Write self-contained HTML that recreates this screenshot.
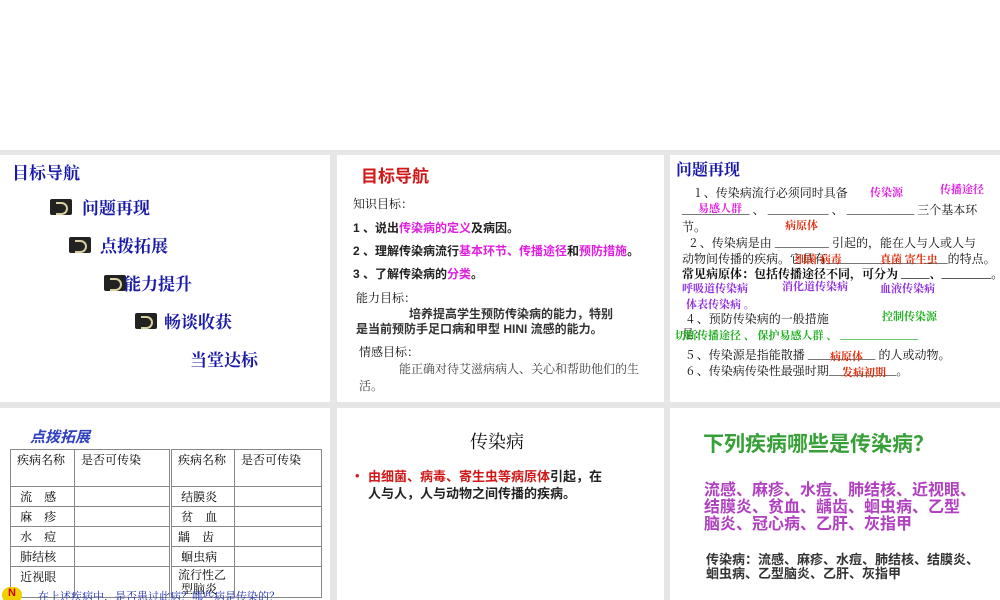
<!DOCTYPE html>
<html><head><meta charset="utf-8"><style>
*{margin:0;padding:0;box-sizing:border-box}
body{width:1000px;height:600px;background:#fff;position:relative;overflow:hidden;font-family:"Liberation Sans","Noto Sans CJK SC",sans-serif}
.gray{position:absolute;left:0;top:150px;width:1000px;height:450px;background:#e6e6e6}
.p{position:absolute;background:#fff;overflow:hidden}
.a{position:absolute;white-space:nowrap}
.nav{color:#1a1aa8;font-weight:bold;font-size:17px;font-family:"Noto Serif CJK SC",serif}
.ic{position:absolute;width:22px;height:16px;background:#222;border-radius:2px}
.ic:after{content:"";position:absolute;left:6px;top:3px;width:10px;height:9px;border:2px solid #d8d0a0;border-left:none;border-radius:0 8px 8px 0}
.b{font-weight:bold;color:#222;font-size:12px}
.m{color:#e020e0}
.hw{font-family:"Noto Serif CJK SC",serif;font-weight:bold;font-size:11px;position:absolute;white-space:nowrap}
.s{font-size:12px;color:#111;font-family:"Noto Serif CJK SC",serif}
table{border-collapse:collapse;font-size:12px;font-family:"Noto Serif CJK SC",serif}
td{border:1px solid #888;vertical-align:top;padding:1px 6px;height:19px}
</style></head><body>
<div class="gray"></div>

<div class="p" style="left:0;top:155px;width:330px;height:247px">
<div class="a nav" style="left:12px;top:4px">目标导航</div>
<div class="ic" style="left:50px;top:44px"></div><div class="a nav" style="left:82px;top:39px">问题再现</div>
<div class="ic" style="left:69px;top:82px"></div><div class="a nav" style="left:100px;top:77px">点拨拓展</div>
<div class="ic" style="left:104px;top:120px"></div><div class="a nav" style="left:124px;top:115px">能力提升</div>
<div class="ic" style="left:135px;top:158px"></div><div class="a nav" style="left:164px;top:153px">畅谈收获</div>
<div class="a nav" style="left:190px;top:191px">当堂达标</div>
</div>

<div class="p" style="left:337px;top:155px;width:327px;height:247px">
<div class="a" style="left:24px;top:7px;color:#d01818;font-weight:bold;font-size:17px">目标导航</div>
<div class="a s" style="left:16px;top:40px">知识目标：</div>
<div class="a b" style="left:16px;top:64px">1 、说出<span class="m">传染病的定义</span>及病因。</div>
<div class="a b" style="left:16px;top:87px">2 、理解传染病流行<span class="m">基本环节、传播途径</span>和<span class="m">预防措施</span>。</div>
<div class="a b" style="left:16px;top:110px">3 、了解传染病的<span class="m">分类</span>。</div>
<div class="a s" style="left:19px;top:134px">能力目标：</div>
<div class="a b" style="left:72px;top:150px;color:#333">培养提高学生预防传染病的能力，特别</div>
<div class="a b" style="left:19px;top:165px;color:#333">是当前预防手足口病和甲型 HINI 流感的能力。</div>
<div class="a s" style="left:22px;top:188px">情感目标：</div>
<div class="a s" style="left:62px;top:205px;color:#444">能正确对待艾滋病病人、关心和帮助他们的生</div>
<div class="a s" style="left:22px;top:222px;color:#444">活。</div>
</div>

<div class="p" style="left:670px;top:155px;width:330px;height:247px;font-family:'Noto Serif CJK SC',serif;font-size:12px;color:#111">
<div class="a" style="left:6px;top:2px;color:#1a1aa8;font-weight:bold;font-size:16px">问题再现</div>
<div class="a" style="left:25px;top:29px">1 、传染病流行必须同时具备</div>
<div class="hw" style="left:200px;top:29px;color:#e020e0">传染源</div>
<div class="hw" style="left:270px;top:26px;color:#e020e0">传播途径</div>
<div class="a" style="left:12px;top:46px">__________ 、 _________ 、 __________ 三个基本环</div>
<div class="hw" style="left:28px;top:45px;color:#e020e0">易感人群</div>
<div class="a" style="left:12px;top:63px">节。</div>
<div class="hw" style="left:115px;top:62px;color:#e03010">病原体</div>
<div class="a" style="left:20px;top:79px">2 、传染病是由 ________ 引起的，能在人与人或人与</div>
<div class="a" style="left:12px;top:95px">动物间传播的疾病。它具有__________________的特点。</div>
<div class="hw" style="left:125px;top:96px;color:#e03010">细菌 病毒</div><div class="hw" style="left:210px;top:96px;color:#e03010">真菌 寄生虫</div>
<div class="a" style="left:12px;top:110px;font-weight:bold">常见病原体：包括传播途径不同，可分为 ____、_______。</div>
<div class="hw" style="left:12px;top:125px;color:#9030e0">呼吸道传染病</div><div class="hw" style="left:112px;top:123px;color:#9030e0">消化道传染病</div><div class="hw" style="left:210px;top:125px;color:#9030e0">血液传染病</div>
<div class="hw" style="left:16px;top:141px;color:#9030e0">体表传染病 。</div>
<div class="a" style="left:17px;top:155px">4 、预防传染病的一般措施</div>
<div class="hw" style="left:212px;top:153px;color:#20b020">控制传染源</div>
<div class="a" style="left:12px;top:170px">是：</div>
<div class="hw" style="left:5px;top:172px;color:#20b020">切断传播途径 、 保护易感人群 、 ____________</div>
<div class="a" style="left:17px;top:191px">5 、传染源是指能散播 __________ 的人或动物。</div>
<div class="hw" style="left:160px;top:193px;color:#e03010">病原体</div>
<div class="a" style="left:17px;top:207px">6 、传染病传染性最强时期__________。</div>
<div class="hw" style="left:172px;top:209px;color:#e03010">发病初期</div>
</div>

<div class="p" style="left:0;top:408px;width:330px;height:192px">
<div class="a" style="left:30px;top:18px;color:#3040c0;font-weight:bold;font-size:15px;font-style:italic">点拨拓展</div>
<table style="position:absolute;left:10px;top:41px;width:312px">
<tr><td style="height:37px;width:64px">疾病名称</td><td style="width:96px">是否可传染</td><td style="width:64px;border-left:3px double #888">疾病名称</td><td>是否可传染</td></tr>
<tr><td>&nbsp;流　感</td><td></td><td style="border-left:3px double #888">&nbsp;结膜炎</td><td></td></tr>
<tr><td>&nbsp;麻　疹</td><td></td><td style="border-left:3px double #888">&nbsp;贫　血</td><td></td></tr>
<tr><td>&nbsp;水　痘</td><td></td><td style="border-left:3px double #888">龋　齿</td><td></td></tr>
<tr><td>&nbsp;肺结核</td><td></td><td style="border-left:3px double #888">&nbsp;蛔虫病</td><td></td></tr>
<tr><td style="height:30px">&nbsp;近视眼</td><td></td><td style="border-left:3px double #888;line-height:14px">流行性乙<br>&nbsp;型脑炎</td><td></td></tr>
</table>
<div class="a" style="left:2px;top:179px;width:20px;height:16px;background:#f0d000;border-radius:8px;color:#c00;font-weight:bold;font-size:11px;text-align:center">N</div>
<div class="a" style="left:38px;top:180px;color:#2030b0;font-size:11px;font-family:'Noto Serif CJK SC',serif">在上述疾病中，是否患过此病？哪些病是传染的？</div>
</div>

<div class="p" style="left:337px;top:408px;width:327px;height:192px">
<div class="a" style="left:133px;top:20px;font-size:18px;color:#111;font-family:'Noto Serif CJK SC',serif">传染病</div>
<div class="a" style="left:18px;top:60px;color:#d01818;font-size:13px">•</div>
<div class="a" style="left:31px;top:60px;font-size:13px;font-weight:bold;color:#222;line-height:17px"><span style="color:#d01818">由细菌、病毒、寄生虫等病原体</span>引起，在<br>人与人，人与动物之间传播的疾病。</div>
</div>

<div class="p" style="left:670px;top:408px;width:330px;height:192px">
<div class="a" style="left:33px;top:20px;font-size:21px;font-weight:bold;color:#38a038">下列疾病哪些是传染病？</div>
<div class="a" style="left:34px;top:74px;font-size:16px;font-weight:bold;color:#b040c0;line-height:17px">流感、麻疹、水痘、肺结核、近视眼、<br>结膜炎、贫血、龋齿、蛔虫病、乙型<br>脑炎、冠心病、乙肝、灰指甲</div>
<div class="a" style="left:36px;top:145px;font-size:13px;font-weight:bold;color:#333;line-height:14px">传染病：流感、麻疹、水痘、肺结核、结膜炎、<br>蛔虫病、乙型脑炎、乙肝、灰指甲</div>
</div>
</body></html>
